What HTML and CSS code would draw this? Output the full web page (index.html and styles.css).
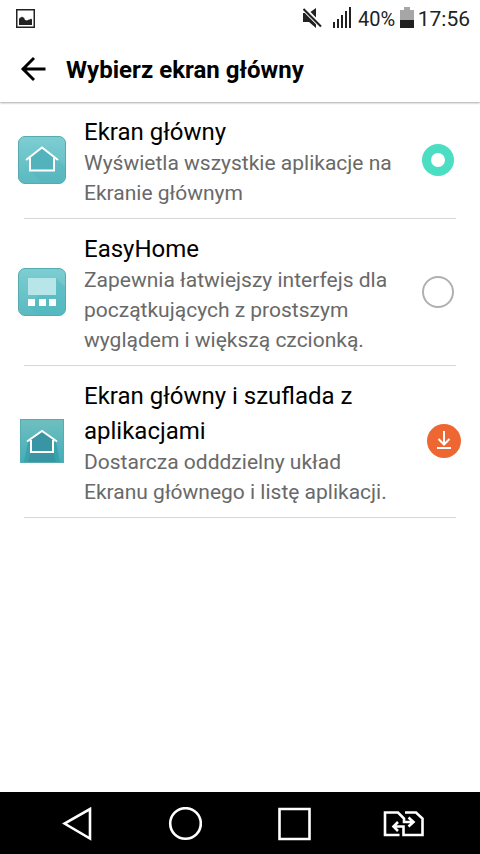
FILE: index.html
```html
<!DOCTYPE html>
<html lang="pl">
<head>
<meta charset="utf-8">
<title>Wybierz ekran główny</title>
<link rel="stylesheet" href="styles.css">
</head>
<body>
<div class="status">
  <svg class="status-picture" width="19" height="19" viewBox="0 0 19 19"><rect x=".75" y=".75" width="17.5" height="17.5" fill="none" stroke="#222" stroke-width="1.5"/><path d="M3 16v-6l1-1.500h1l1-1 1 1h1l1 2.500 2 .5 2-1h1l1-1 1 1v5.500z" fill="#222"/></svg>
  <svg class="status-mute" width="19" height="20" viewBox="0 0 19 20"><path d="M0 5h6l7-5v20l-7-6H0z" fill="#222"/><path d="M1-1.500 20 17.500" stroke="#fff" stroke-width="1.500"/><path d="M.5 1 18 18.500" stroke="#fff" stroke-width="4"/><path d="M.5 1 18 18.500" stroke="#222" stroke-width="2"/></svg>
  <svg class="status-signal" width="19" height="21" viewBox="0 0 19 21"><path d="M0 15h2v6H0zM4 12h2v9H4zM8 8h2v13H8zM12 4h2v17h-2zM16 0h2v21h-2z" fill="#222"/></svg>
  <span class="status-percent">40%</span>
  <svg class="status-battery" width="14" height="21" viewBox="0 0 14 21"><path d="M4 0h6v3h4v11H0V3h4z" fill="#a6a6a6"/><path d="M0 13h14v8H0z" fill="#202020"/></svg>
  <span class="status-time">17:56</span>
</div>
<header class="header">
  <svg width="26" height="26" viewBox="0 0 26 26" fill="none" stroke="#000" stroke-width="2.9"><path d="M14 2 3 13l11 11M2 13h23.500"/></svg>
  <h1>Wybierz ekran główny</h1>
</header>
<main>
  <section class="item">
    <div class="item-icon">
      <svg width="48" height="48" viewBox="0 0 48 48">
        <defs><linearGradient id="tile" x2="0" y2="1"><stop stop-color="#7dced2"/><stop offset="1" stop-color="#5ab9c0"/></linearGradient></defs>
        <rect x=".5" y=".5" width="47" height="47" rx="6.500" fill="url(#tile)" stroke="#55abb0"/>
        <path d="M38 22 47 31v10q0 6-6 6H24L12 35z" fill="#4fb2ba" opacity=".35"/>
        <path d="M12 21 24 12l12 9v13H12z" fill="#52b3bc"/>
        <path d="M8 24 24 11.500 40 24M12 22v12.500h24V22" fill="none" stroke="#fff" stroke-width="2"/>
      </svg>
    </div>
    <div class="item-text"><h2>Ekran główny</h2><p>Wyświetla wszystkie aplikacje na<br>Ekranie głównym</p></div>
    <div class="radio radio-on"></div>
  </section>
  <section class="item">
    <div class="item-icon">
      <svg width="48" height="48" viewBox="0 0 48 48">
        <rect x=".5" y=".5" width="47" height="47" rx="6.500" fill="url(#tile)" stroke="#55abb0"/>
        <path d="M38 10 47 19v22q0 6-6 6H19l-9-9z" fill="#4fb8c0" opacity=".5"/>
        <path d="M10 10h28v17H10z" fill="#b8e5e7"/>
        <path d="M10 31h7v7h-7zM21 31h7v7h-7zM31 31h7v7h-7z" fill="#fff"/>
      </svg>
    </div>
    <div class="item-text"><h2>EasyHome</h2><p>Zapewnia łatwiejszy interfejs dla<br>początkujących z prostszym<br>wyglądem i większą czcionką.</p></div>
    <div class="radio"></div>
  </section>
  <section class="item">
    <div class="item-icon">
      <svg width="44" height="44" viewBox="0 0 44 44">
        <defs><linearGradient id="drawer" x2="0" y2="1"><stop stop-color="#70bfc0"/><stop offset="1" stop-color="#42aeb8"/></linearGradient></defs>
        <rect x=".5" y=".5" width="43" height="43" fill="url(#drawer)" stroke="#56adb1"/>
        <path d="M8 23 4 43h36l-4-20z" fill="#3aa1ad"/>
        <path d="M11 20 22 12l11 8v13l3 10H8l3-10z" fill="#3995a3"/>
        <path d="M7 22.500 22 12l15 10.500M11 21v12h22V21" fill="none" stroke="#fff" stroke-width="2"/>
      </svg>
    </div>
    <div class="item-text"><h2>Ekran główny i szuflada z<br>aplikacjami</h2><p>Dostarcza odddzielny układ<br>Ekranu głównego i listę aplikacji.</p></div>
    <svg class="download" width="34" height="34" viewBox="0 0 34 34"><circle cx="17" cy="17" r="17" fill="#ee6733"/><path d="M17 7v13M11.500 15l5.500 5.500 5.500-5.500M10 24h14" fill="none" stroke="#fff" stroke-width="2"/></svg>
  </section>
</main>
<nav class="nav">
  <svg width="30" height="34" viewBox="0 0 30 34"><path d="M28 2v29.500L2.500 16.500z"/></svg>
  <svg width="34" height="34" viewBox="0 0 34 34"><circle cx="17.500" cy="16.500" r="15.300"/></svg>
  <svg width="34" height="34" viewBox="0 0 34 34"><path d="M2.500 2h30v30h-30z"/></svg>
  <svg width="40" height="34" viewBox="0 0 40 34"><path d="M15.500 28H1V5.500H14l6 6V15h9M24.500 10.500l5 4.500-5 4.500M21 5.500h11l6.500 6V28H19.500V19.500H9.500M14 15 9.500 19.500 14 24"/></svg>
</nav>
</body>
</html>
```
FILE: styles.css
```css
* { box-sizing: border-box; }
body {
  margin: 0;
  height: 854px;
  display: flex;
  flex-direction: column;
  background: #fff;
  color: #000;
  font-family: Roboto, "Liberation Sans", sans-serif;
}
svg { display: block; flex: none; }
h1, h2, p { margin: 0; white-space: nowrap; }
.status {
  height: 37px;
  display: flex;
  align-items: center;
  padding: 0 10px 0 16px;
  color: #222;
}
.status-picture { margin-right: auto; }
.status-mute { margin-bottom: 2px; }
.status-signal { margin: 0 0 2px 11px; }
.status-percent { width: 37px; margin-left: 6px; font-size: 20px; line-height: 37px; padding-top: 1px; }
.status-battery { margin: 0 0 2px 5px; }
.status-time { width: 56px; font-size: 21px; line-height: 37px; white-space: nowrap; text-align: right; padding-top: 1px; }
.header {
  height: 65px;
  display: flex;
  align-items: center;
  gap: 20px;
  padding-left: 20px;
  box-shadow: 0 1px 2px rgba(0, 0, 0, .35);
  clip-path: inset(0 0 -4px);
}
.header svg { margin-bottom: 2px; }
.header h1 { font-size: 24px; font-weight: 700; line-height: 34px; padding-top: 1px; letter-spacing: .04px; }
main { flex: 1; }
.item {
  display: flex;
  align-items: center;
  margin: 0 24px;
  padding: 9px 0 10px;
  border-bottom: 1px solid #d8d8d8;
}
.item-icon {
  width: 48px;
  margin-left: -6px;
  margin-right: 18px;
  display: flex;
  justify-content: center;
}
.item-text { flex: 1; padding-top: 4px; }
h2 { font-size: 24px; font-weight: 400; line-height: 35px; }
p { margin-top: -2px; font-size: 21px; line-height: 30px; color: #696969; }
.radio {
  width: 32px;
  height: 32px;
  margin-right: 2px;
  border: 2px solid #b0b0b0;
  border-radius: 50%;
}
.radio-on { border: 9px solid #4cdec2; }
.download { margin-right: -5px; }
.nav {
  height: 62px;
  display: flex;
  align-items: center;
  padding: 1px 0 0 62px;
  background: #000;
}
.nav svg { fill: none; stroke: #fff; stroke-width: 2.600; }
.nav svg:nth-child(2) { margin-left: 76px; }
.nav svg:nth-child(3) { margin-left: 75px; }
.nav svg:nth-child(4) { margin-left: 73px; overflow: visible; }
```
